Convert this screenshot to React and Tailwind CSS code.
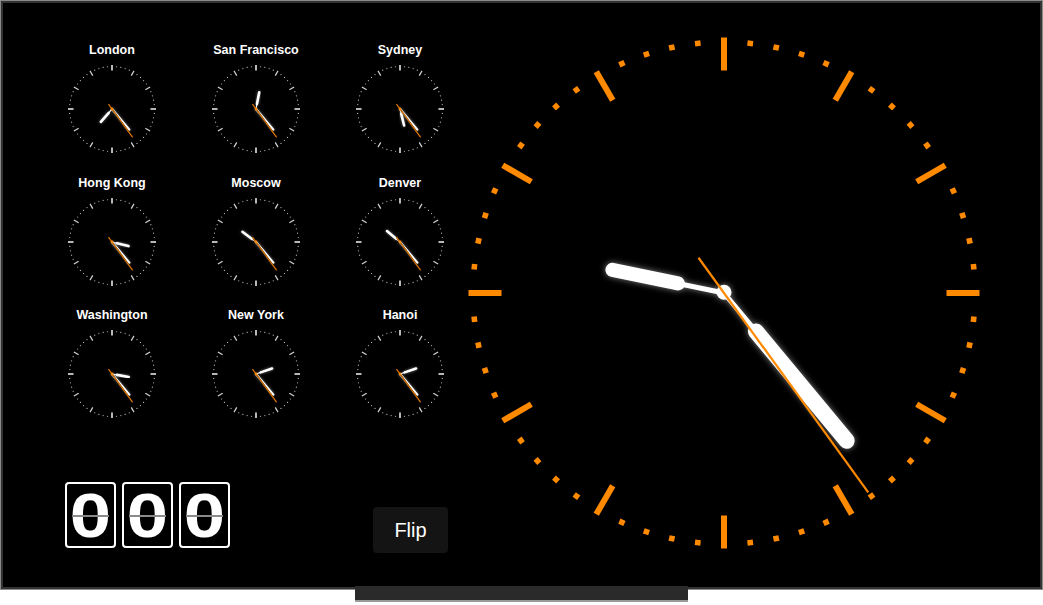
import React from 'react'

const ORANGE = '#ff8a00'

const cities = [
  { name: 'London', hour: 221 },
  { name: 'San Francisco', hour: 11 },
  { name: 'Sydney', hour: 166 },
  { name: 'Hong Kong', hour: 104 },
  { name: 'Moscow', hour: 307 },
  { name: 'Denver', hour: 310 },
  { name: 'Washington', hour: 100 },
  { name: 'New York', hour: 71 },
  { name: 'Hanoi', hour: 71 },
]

// point on a circle, angle in degrees clockwise from 12
function pt(c, r, a) {
  const rad = (a * Math.PI) / 180
  return [c + r * Math.sin(rad), c - r * Math.cos(rad)]
}

function Hand({ c, a, from, to, width, color, cap = 'round', filter }) {
  const [x1, y1] = pt(c, from, a)
  const [x2, y2] = pt(c, to, a)
  return (
    <line
      x1={x1}
      y1={y1}
      x2={x2}
      y2={y2}
      stroke={color}
      strokeWidth={width}
      strokeLinecap={cap}
      filter={filter}
    />
  )
}

function SmallClock({ hour, id }) {
  const c = 45
  const ticks = []
  for (let i = 0; i < 60; i++) {
    const a = i * 6
    if (i % 5 === 0) {
      const big = i % 15 === 0
      ticks.push(
        <Hand key={i} c={c} a={a} from={38.5} to={44} width={big ? 1.6 : 1.2} color={big ? '#e5e5e5' : '#d4d4d4'} cap="butt" />
      )
    } else {
      const [x, y] = pt(c, 42.5, a)
      ticks.push(<circle key={i} cx={x} cy={y} r={0.6} fill="#bdbdbd" />)
    }
  }
  return (
    <svg width="90" height="90" viewBox="0 0 90 90">
      <defs>
        <filter id={`sg${id}`} x="-50%" y="-50%" width="200%" height="200%">
          <feDropShadow dx="0" dy="0" stdDeviation="1.4" floodColor="#ffffff" floodOpacity="0.45" />
        </filter>
      </defs>
      {ticks}
      <Hand c={c} a={hour} from={0} to={5} width={1.2} color="#f5f5f5" />
      <Hand c={c} a={hour} from={5} to={17} width={2.6} color="#ffffff" filter={`url(#sg${id})`} />
      <Hand c={c} a={140} from={0} to={27} width={2.2} color="#ffffff" filter={`url(#sg${id})`} />
      <Hand c={c} a={144} from={-6} to={35} width={1.6} color="#7a3c00" cap="butt" />
      <Hand c={c} a={144} from={-6} to={35} width={0.8} color={ORANGE} cap="butt" />
      <circle cx={c} cy={c} r={1.4} fill={ORANGE} />
    </svg>
  )
}

function BigClock() {
  const c = 270
  const marks = []
  for (let i = 0; i < 60; i++) {
    const a = i * 6
    if (i % 5 === 0) {
      marks.push(<Hand key={i} c={c} a={a} from={222.5} to={255.5} width={6} color={ORANGE} cap="butt" />)
    } else {
      const [x, y] = pt(c, 251, a)
      marks.push(
        <rect
          key={i}
          x={-2.8}
          y={-2.8}
          width={5.6}
          height={5.6}
          fill={ORANGE}
          transform={`translate(${x} ${y}) rotate(${a})`}
        />
      )
    }
  }
  return (
    <svg width="540" height="540" viewBox="0 0 540 540" className="mt-[19.5px] shrink-0">
      <defs>
        <filter id="glow" x="-50%" y="-50%" width="200%" height="200%">
          <feDropShadow dx="0" dy="0" stdDeviation="3" floodColor="#ffffff" floodOpacity="0.5" />
        </filter>
      </defs>
      {marks}
      <g filter="url(#glow)">
        <Hand c={c} a={281.7} from={0} to={47} width={5} color="#ffffff" />
        <Hand c={c} a={281.7} from={47} to={114} width={14} color="#ffffff" />
        <Hand c={c} a={140.3} from={0} to={50} width={5} color="#ffffff" />
        <Hand c={c} a={140.3} from={50} to={192} width={16} color="#ffffff" />
        <circle cx={c} cy={c - 0.8} r={7.5} fill="#ffffff" />
      </g>
      <Hand c={c} a={144.1} from={-43.5} to={246} width={2.2} color={ORANGE} cap="butt" />
    </svg>
  )
}

function FlipDigit({ value }) {
  return (
    <div className="relative flex h-[66px] w-[51px] items-center justify-center rounded-[4px] border-2 border-white bg-black">
      <span className="inline-block scale-x-[1.18] font-['Liberation_Sans',Arial,sans-serif] text-[63px] font-bold leading-none text-white">
        {value}
      </span>
      <div className="absolute left-[5px] right-[5px] top-[31px] h-[2px] bg-[#8a8a8a]" />
    </div>
  )
}

export default function App() {
  return (
    <div className="h-[605px] w-[1043px] overflow-hidden bg-white font-['Liberation_Sans',Arial,sans-serif]">
      <div className="h-[590px] w-full bg-[#8a8a8a] p-px">
        <div className="flex h-full w-full border-2 border-[#333333] bg-black">
          <div className="w-[450.5px] shrink-0 pl-[37px] pt-[39px]">
            <div className="grid grid-cols-[144px_144px_144px] gap-y-[20.5px]">
              {cities.map((city, i) => (
                <div key={city.name} className="flex flex-col items-center gap-[6px]">
                  <div className="h-[16px] text-[12.5px] font-bold leading-[16px] text-white">{city.name}</div>
                  <SmallClock hour={city.hour} id={i} />
                </div>
              ))}
            </div>
            <div className="mt-[63px] flex items-start">
              <div className="ml-[25px] flex gap-[6px]">
                <FlipDigit value="0" />
                <FlipDigit value="0" />
                <FlipDigit value="0" />
              </div>
              <button className="ml-[143px] mt-[25px] flex h-[46px] w-[75px] items-center justify-center rounded-[4px] bg-[#141414] text-[20px] text-white">
                Flip
              </button>
            </div>
          </div>
          <BigClock />
        </div>
      </div>
      <div className="mx-auto -mt-[4px] h-[16px] w-[333px] border-b-2 border-[#9a9a9a] bg-[#2a2a2a]" />
    </div>
  )
}
